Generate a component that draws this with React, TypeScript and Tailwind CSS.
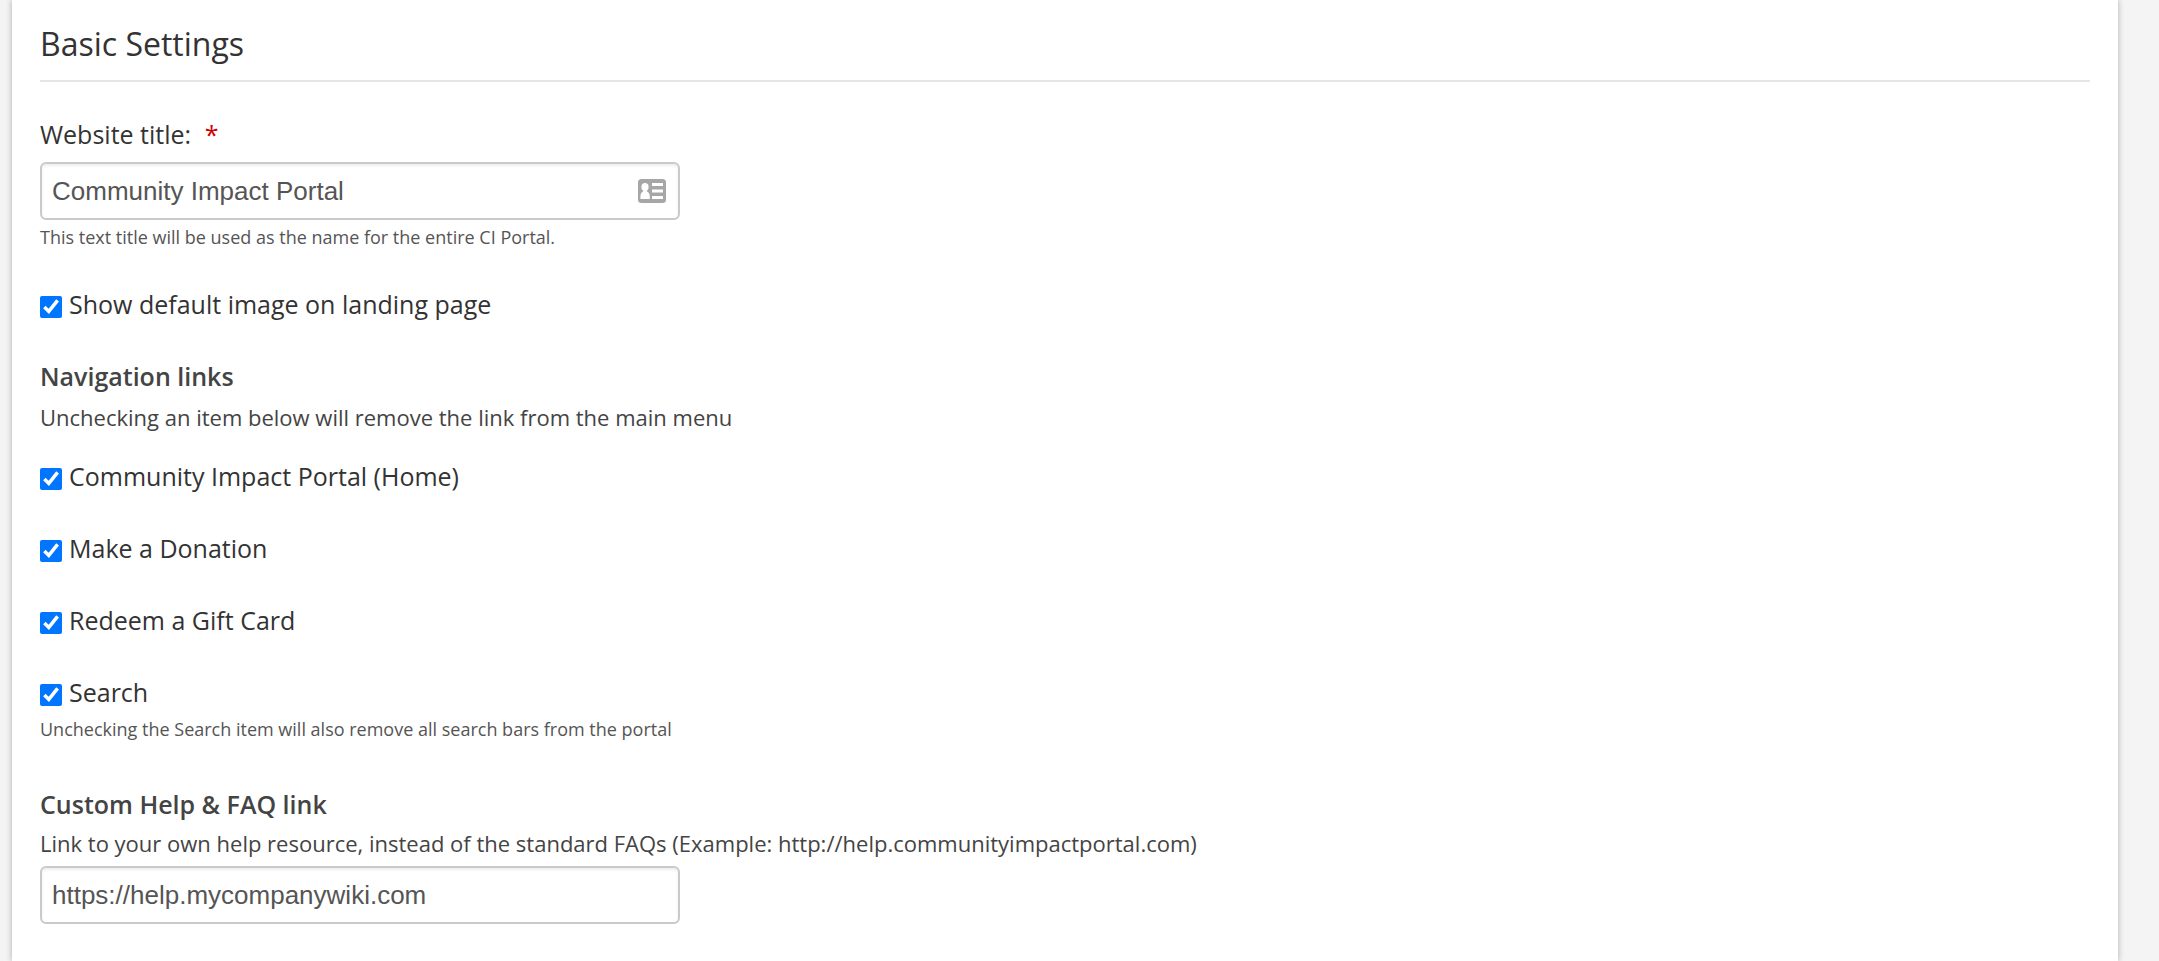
import React from "react";

const inputClass =
  "block h-[58px] w-full rounded-md border-2 border-[#cacaca] bg-white px-[10px] font-['Liberation_Sans',Arial,sans-serif] text-[26px] text-[#555] shadow-[inset_0_2px_3px_rgba(0,0,0,0.07)] outline-none";

const navLinks = [
  { id: "nav-home", label: "Community Impact Portal (Home)" },
  { id: "nav-donate", label: "Make a Donation" },
  { id: "nav-gift-card", label: "Redeem a Gift Card" },
  { id: "nav-search", label: "Search" },
];

const ContactCardIcon = () => (
  <svg viewBox="0 0 28 24" className="h-6 w-7" aria-hidden="true">
    <rect width="28" height="24" rx="3.5" fill="#a6a6a6" />
    <g fill="#fff">
      <ellipse cx="7" cy="7.9" rx="3.6" ry="3.9" />
      <path d="M5.4 11h3.2v1.3c2.2.9 3.2 2.800 3.200 5.200V20H2.400v-2.500c0-2.400 1-4.300 3-5.200z" />
      <rect x="14" y="4" width="11" height="3" />
      <rect x="14" y="10.5" width="11" height="3" />
      <rect x="14" y="17" width="11" height="3" />
    </g>
  </svg>
);

const CheckField = ({ id, label }: { id: string; label: string }) => (
  <div className="flex items-center gap-[7px]">
    <input
      id={id}
      type="checkbox"
      defaultChecked
      className="mt-[6px] size-[22px] shrink-0 accent-[#0075ff]"
    />
    <label htmlFor={id} className="text-[25px] leading-9">
      {label}
    </label>
  </div>
);

const App = () => {
  return (
    <div className="min-h-screen bg-[#f4f4f4] pr-[41px] pl-3 font-['Open_Sans',sans-serif] text-[#333]">
      <main className="min-h-screen bg-white px-7 pt-5 pb-9 shadow-[0_0_6px_rgba(0,0,0,0.3)]">
        <h1 className="border-b-2 border-[#e5e5e5] pb-3 text-[32px] leading-[48px]">
          Basic Settings
        </h1>

        {/* Website title */}
        <div className="mt-[34px]">
          <label htmlFor="site-title" className="block text-[25px] leading-9">
            Website title: <span className="ml-[7px] text-[#c00]">*</span>
          </label>
          <div className="relative mt-[10px] max-w-[640px]">
            <input
              id="site-title"
              type="text"
              required
              defaultValue="Community Impact Portal"
              className={inputClass}
            />
            <span className="pointer-events-none absolute inset-y-0 right-[14px] flex items-center">
              <ContactCardIcon />
            </span>
          </div>
          <p className="mt-[5px] text-[18px] leading-6 text-[#555]">
            This text title will be used as the name for the entire CI Portal.
          </p>
        </div>

        <div className="mt-[37px]">
          <CheckField id="default-image" label="Show default image on landing page" />
        </div>

        {/* Navigation links */}
        <section className="mt-9">
          <h2 className="text-[25px] leading-9 font-semibold text-[#444]">Navigation links</h2>
          <p className="mt-[7px] text-[22px] leading-8 text-[#444]">
            Unchecking an item below will remove the link from the main menu
          </p>
          <div className="mt-[25px] flex flex-col gap-9">
            {navLinks.map((link) => (
              <CheckField key={link.id} {...link} />
            ))}
          </div>
          <p className="mt-[7px] text-[18px] leading-6 text-[#555]">
            Unchecking the Search item will also remove all search bars from the portal
          </p>
        </section>

        {/* Help link */}
        <section className="mt-[45px]">
          <h2 className="text-[25px] leading-9 font-semibold text-[#444]">
            Custom Help &amp; FAQ link
          </h2>
          <label htmlFor="help-link" className="mt-[5px] block text-[22px] leading-8 text-[#444]">
            Link to your own help resource, instead of the standard FAQs (Example:
            http://help.communityimpactportal.com)
          </label>
          <div className="mt-[7px] max-w-[640px]">
            <input
              id="help-link"
              type="text"
              defaultValue="https://help.mycompanywiki.com"
              className={inputClass}
            />
          </div>
        </section>
      </main>
    </div>
  );
};

export default App;
